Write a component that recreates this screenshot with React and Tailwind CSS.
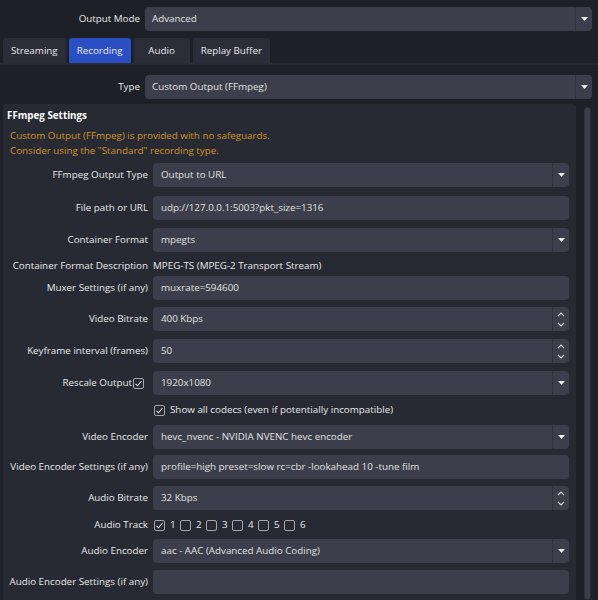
import React from "react";

const font = { fontFamily: '"Open Sans", "Noto Sans", sans-serif' };

const Arrow = () => (
  <svg width="7" height="4" viewBox="0 0 7 4">
    <path d="M0 0h7L3.5 4z" fill="#ececec" />
  </svg>
);

const Combo = ({ value, pad = "pl-[8px]" }) => (
  <div className="flex h-6 items-stretch rounded-[4px] bg-[#3c3f4b]">
    <div className={`flex flex-1 items-center truncate text-[#e0e0e0] ${pad}`}>{value}</div>
    <div className="flex w-[17px] items-center justify-center border-l border-[#30333d]">
      <Arrow />
    </div>
  </div>
);

const TextBox = ({ value }) => (
  <div className="flex h-6 items-center rounded-[4px] bg-[#3c3f4b] pl-[8px] text-[#e0e0e0]">{value}</div>
);

const Spin = ({ value }) => (
  <div className="flex h-6 items-stretch rounded-[4px] bg-[#3c3f4b]">
    <div className="flex flex-1 items-center pl-[8px] text-[#e0e0e0]">{value}</div>
    <div className="flex w-[17px] flex-col items-center justify-center gap-[5px] border-l border-[#30333d]">
      <svg width="8" height="5" viewBox="0 0 8 5">
        <path d="M1 4l3-3 3 3" fill="none" stroke="#d4d4d4" strokeWidth="1.2" />
      </svg>
      <svg width="8" height="5" viewBox="0 0 8 5">
        <path d="M1 1l3 3 3-3" fill="none" stroke="#d4d4d4" strokeWidth="1.2" />
      </svg>
    </div>
  </div>
);

const Check = ({ checked }) => (
  <span className="inline-flex h-[11px] w-[11px] shrink-0 items-center justify-center rounded-[2px] border border-[#a6a6a6]">
    {checked && (
      <svg width="9" height="9" viewBox="0 0 9 9">
        <path d="M1.5 4.8l2 2 4-4.8" fill="none" stroke="#e0e0e0" strokeWidth="1.1" />
      </svg>
    )}
  </span>
);

const Row = ({ label, children, className = "" }) => (
  <div className={`grid grid-cols-[145px_1fr] items-center gap-x-[5px] ${className}`}>
    <div className="text-right text-[#e8e8e8]">{label}</div>
    <div>{children}</div>
  </div>
);

const tabs = ["Streaming", "Recording", "Audio", "Replay Buffer"];

export default function App() {
  return (
    <div
      className="flex h-[600px] w-[598px] flex-col overflow-hidden bg-[#1e2028] text-[9.8px] leading-[14px]"
      style={font}
    >
      {/* Output mode */}
      <div className="mt-[7px] grid grid-cols-[140px_1fr] items-center gap-x-[5px] pr-[6px]">
        <div className="text-right text-[#e8e8e8]">Output Mode</div>
        <Combo value="Advanced" pad="pl-[7px]" />
      </div>

      {/* Tabs */}
      <div className="mt-[7px] flex gap-[3px] pl-[3px]">
        {tabs.map((t) => (
          <div
            key={t}
            className={`flex h-[25px] min-w-[56px] items-center justify-center rounded-t-[3px] px-[8px] text-[#e8e8e8] ${
              t === "Recording" ? "bg-[#2a4fc2]" : "bg-[#2b2e38]"
            }`}
          >
            {t}
          </div>
        ))}
      </div>

      <div className="flex flex-1 flex-col border-t-2 border-[#292c35]">
        {/* Type */}
        <div className="mt-[10px] grid grid-cols-[140px_1fr] items-center gap-x-[5px] pr-[6px]">
          <div className="text-right text-[#e8e8e8]">Type</div>
          <Combo value="Custom Output (FFmpeg)" pad="pl-[7px]" />
        </div>

        <div className="mt-[5px] flex flex-1 gap-[8px] pl-[3px] pr-[7px]">
          {/* Group box */}
          <div className="flex-1 rounded-t-[4px] bg-[#272a33] pr-[7px]">
            <div className="pl-[4px] pt-[5px] font-bold text-white">FFmpeg Settings</div>
            <div className="mt-[5px] pl-[7px] leading-[15px] text-[#cf9528]">
              <div>Custom Output (FFmpeg) is provided with no safeguards.</div>
              <div>Consider using the "Standard" recording type.</div>
            </div>

            <Row label="FFmpeg Output Type" className="mt-[5px]">
              <Combo value="Output to URL" />
            </Row>
            <Row label="File path or URL" className="mt-[9px]">
              <TextBox value="udp://127.0.0.1:5003?pkt_size=1316" />
            </Row>
            <Row label="Container Format" className="mt-[8px]">
              <Combo value="mpegts" />
            </Row>
            <Row label="Container Format Description" className="mt-[6px] h-4">
              <div className="text-[#e8e8e8]">MPEG-TS (MPEG-2 Transport Stream)</div>
            </Row>
            <Row label="Muxer Settings (if any)" className="mt-[2px]">
              <TextBox value="muxrate=594600" />
            </Row>
            <Row label="Video Bitrate" className="mt-[7px]">
              <Spin value="400 Kbps" />
            </Row>
            <Row label="Keyframe interval (frames)" className="mt-[8px]">
              <Spin value="50" />
            </Row>
            <Row
              label={
                <span className="inline-flex items-center justify-end gap-[1px] pr-[4px]">
                  Rescale Output <Check checked />
                </span>
              }
              className="mt-[8px]"
            >
              <Combo value="1920x1080" />
            </Row>
            <Row label="" className="mt-[7px] h-4">
              <div className="flex items-center gap-[5px] pl-[1px] text-[#e8e8e8]">
                <Check checked />
                <span>Show all codecs (even if potentially incompatible)</span>
              </div>
            </Row>
            <Row label="Video Encoder" className="mt-[7px]">
              <Combo value="hevc_nvenc - NVIDIA NVENC hevc encoder" />
            </Row>
            <Row label="Video Encoder Settings (if any)" className="mt-[6px]">
              <TextBox value="profile=high preset=slow rc=cbr -lookahead 10 -tune film" />
            </Row>
            <Row label="Audio Bitrate" className="mt-[7px]">
              <Spin value="32 Kbps" />
            </Row>
            <Row label="Audio Track" className="mt-[7px] h-4">
              <div className="flex items-center pl-[1px] text-[#e8e8e8]">
                {[1, 2, 3, 4, 5, 6].map((n) => (
                  <span key={n} className="flex w-[26px] items-center gap-[5px]">
                    <Check checked={n === 1} />
                    <span>{n}</span>
                  </span>
                ))}
              </div>
            </Row>
            <Row label="Audio Encoder" className="mt-[6px]">
              <Combo value="aac - AAC (Advanced Audio Coding)" />
            </Row>
            <Row label="Audio Encoder Settings (if any)" className="mt-[7px]">
              <TextBox value="" />
            </Row>
          </div>

          {/* Scrollbar */}
          <div className="mt-[3px] w-[7px] rounded-[3px] border border-[#2c2f38] bg-[#3b3e49]" />
        </div>
      </div>
    </div>
  );
}
